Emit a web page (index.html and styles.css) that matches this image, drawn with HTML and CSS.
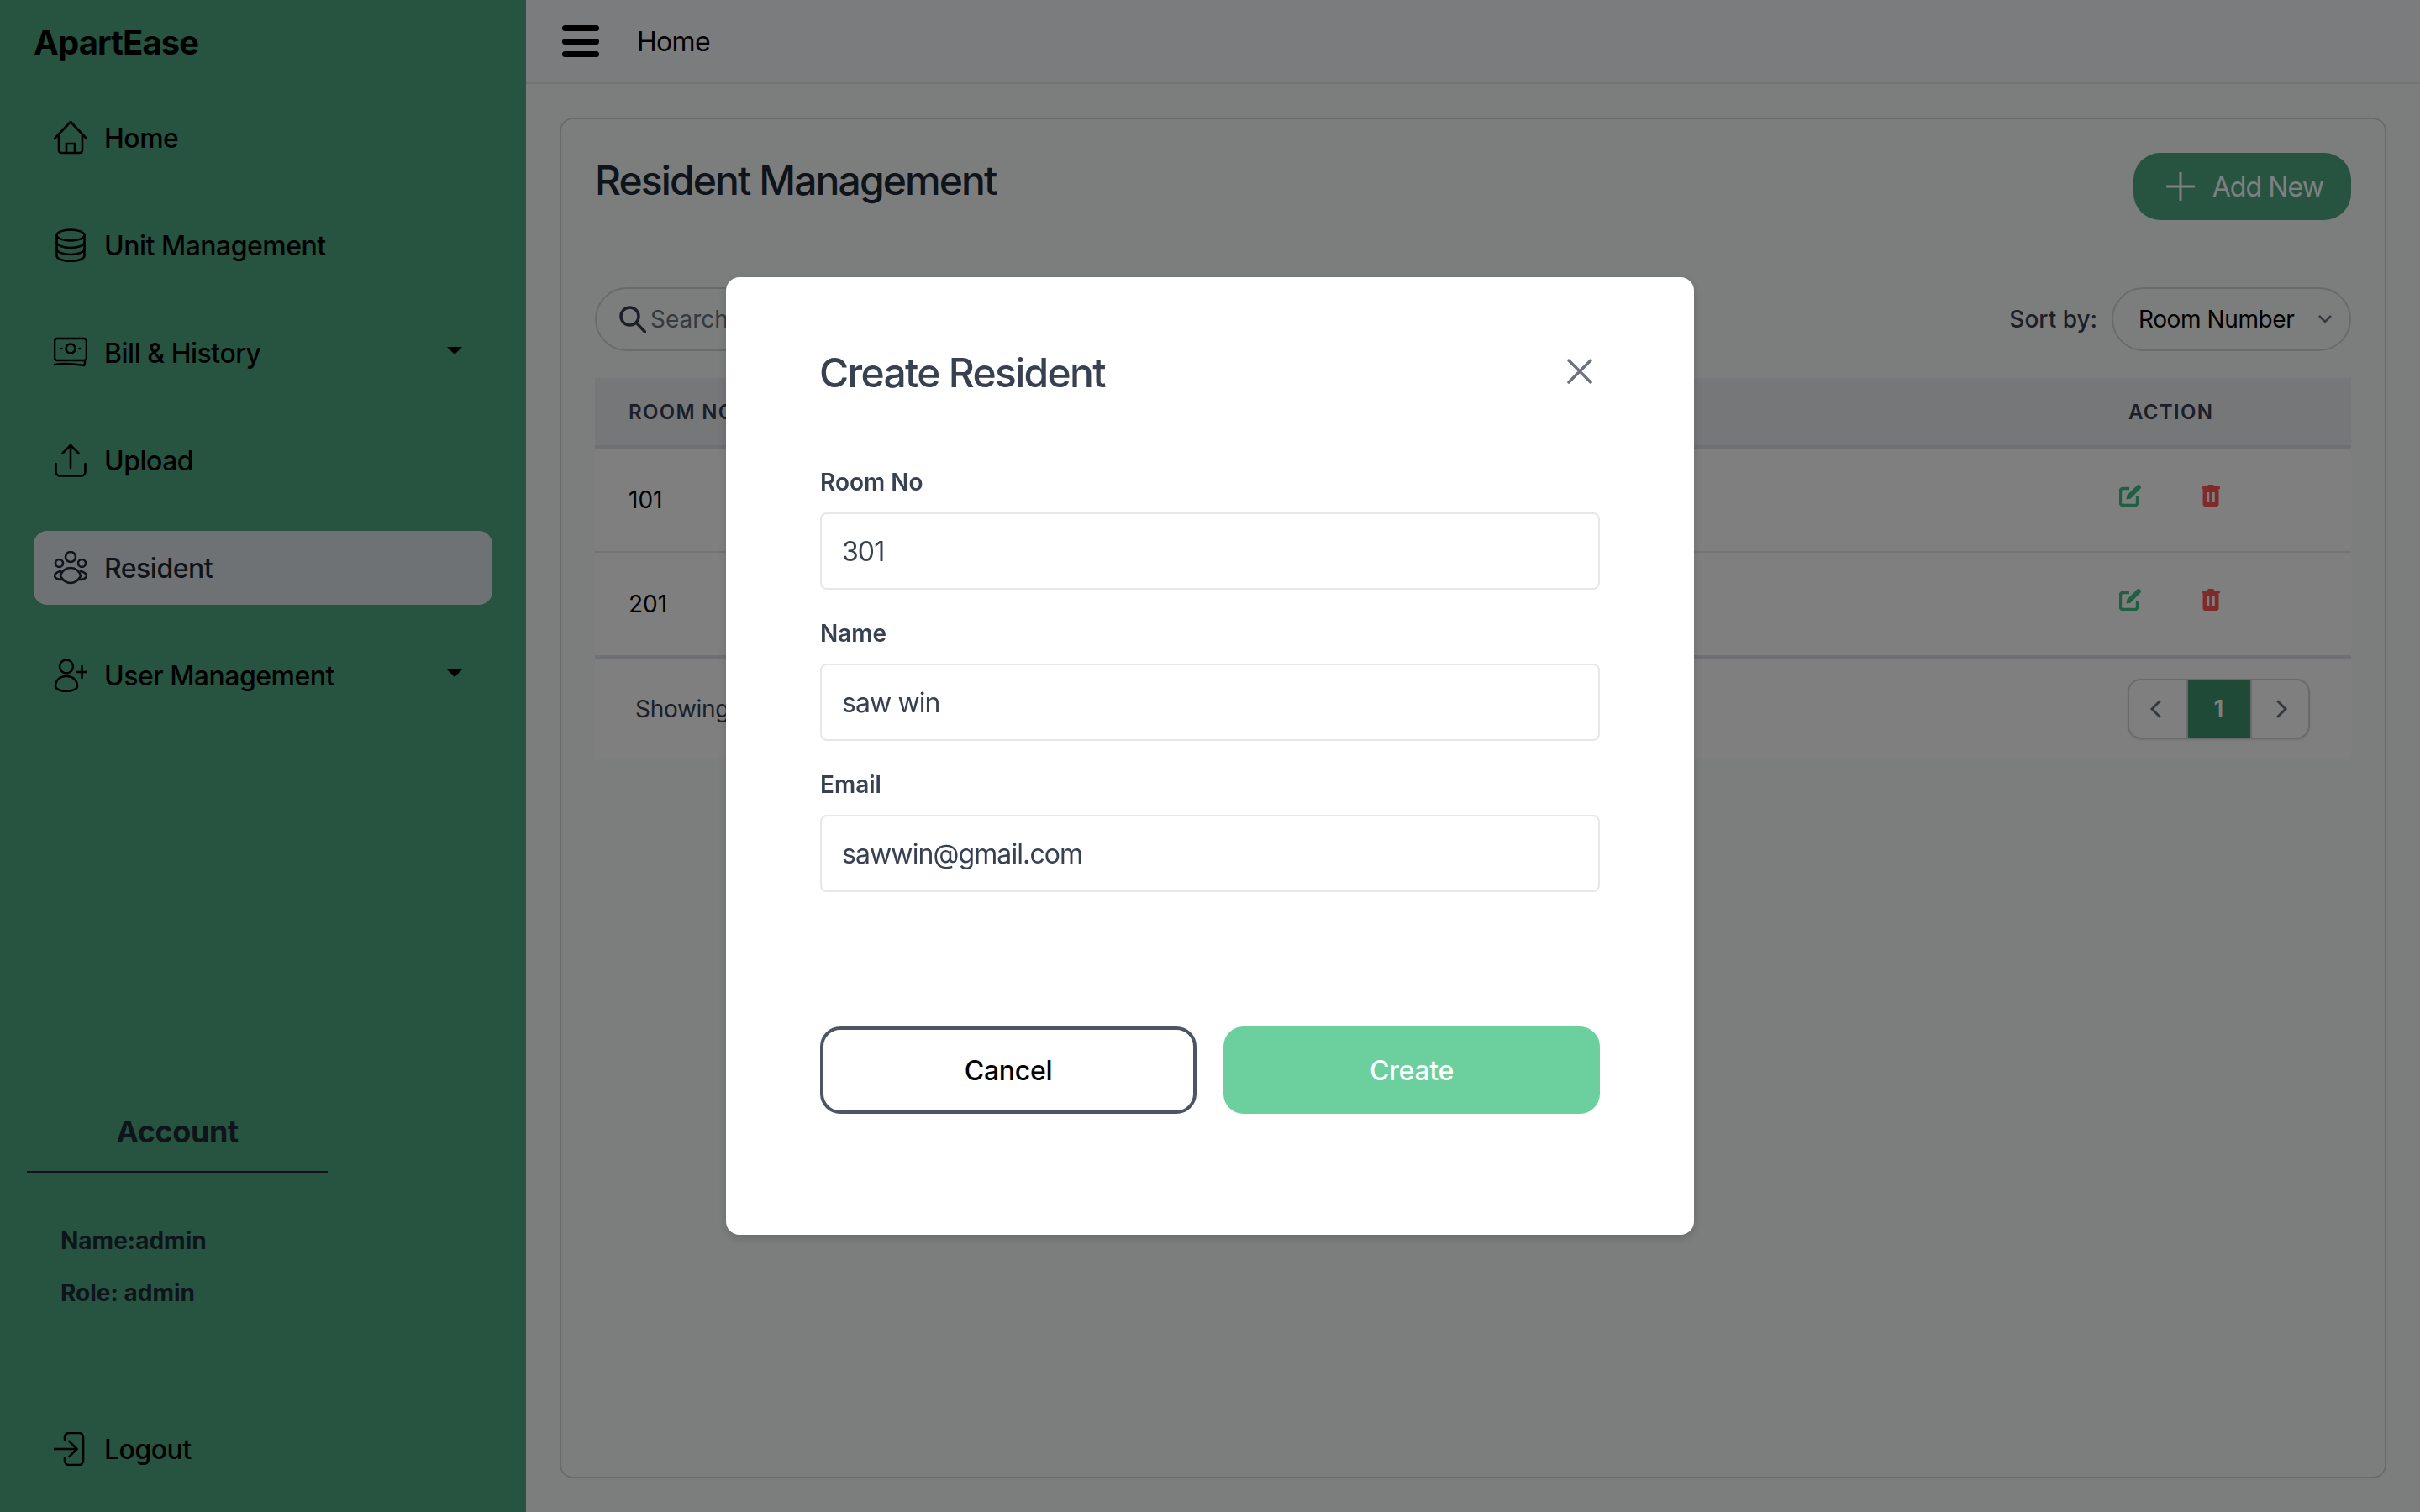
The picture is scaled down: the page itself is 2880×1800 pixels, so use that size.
FILE: index.html
```html
<!DOCTYPE html>
<html lang="en">
<head>
    <meta charset="UTF-8">
    <title>ApartEase - Resident Management</title>
    <link rel="stylesheet" href="styles.css">
</head>
<body>
    <div class="app">
        <aside class="sidebar">
            <div class="logo">ApartEase</div>
            <nav class="nav">
                <a class="nav-item">
                    <svg class="nav-icon" viewBox="0 0 40 40"><path d="M1 21 20 1l19 20"/><path d="M6 16v19a3 3 0 0 0 3 3h22a3 3 0 0 0 3-3V16"/><path d="M15 38V27h10v11"/></svg>
                    <span>Home</span>
                </a>
                <a class="nav-item">
                    <svg class="nav-icon" viewBox="0 0 40 40"><ellipse cx="20" cy="8" rx="16.500" ry="6.500"/><path d="M3.500 8v24.500C3.500 36 11 39 20 39s16.500-3 16.500-6.500V8"/><path d="M3.500 16.500C3.500 20 11 23 20 23s16.500-3 16.500-6.500"/><path d="M3.500 24.500C3.500 28 11 31 20 31s16.500-3 16.500-6.500"/></svg>
                    <span>Unit Management</span>
                </a>
                <a class="nav-item">
                    <svg class="nav-icon" viewBox="0 0 40 40"><rect x="1" y="3" width="38" height="26" rx="3"/><circle cx="20" cy="15" r="5.500"/><path d="M1 34c10-2 22-1 35 1 1-1 1-3 1-4"/><path d="M9 15h.5M30.500 15h.5"/></svg>
                    <span>Bill &amp; History</span>
                    <span class="caret"></span>
                </a>
                <a class="nav-item">
                    <svg class="nav-icon" viewBox="0 0 40 40"><path d="M20 29V2"/><path d="M10.500 11.500 20 2l9.500 9.500"/><path d="M2.500 24v9.500a5 5 0 0 0 5 5h25a5 5 0 0 0 5-5V24"/></svg>
                    <span>Upload</span>
                </a>
                <a class="nav-item active">
                    <svg class="nav-icon" viewBox="0 0 40 40"><circle cx="20" cy="7" r="6"/><circle cx="6.500" cy="14.500" r="4.500"/><circle cx="33.500" cy="14.500" r="4.500"/><path d="M8 30c1-6 6-10 12-10s11 4 12 10c-3 5-7 8-12 8s-9-3-12-8Z"/><path d="M8 24c-4 1-7 3-7 6 1 2 4 4 9 4M32 24c4 1 7 3 7 6-1 2-4 4-9 4"/></svg>
                    <span>Resident</span>
                </a>
                <a class="nav-item">
                    <svg class="nav-icon" viewBox="0 0 40 40"><circle cx="15" cy="9.500" r="8"/><path d="M2 33c0-7 5-12 13-12s13 5 13 12c0 3-6 6-13 6S2 36 2 33Z"/><path d="M33.500 9v14M28 16h11"/></svg>
                    <span>User Management</span>
                    <span class="caret"></span>
                </a>
            </nav>
            <div class="account">
                <h2 class="account-title">Account</h2>
                <p class="account-line">Name:admin</p>
                <p class="account-line">Role: admin</p>
            </div>
            <a class="nav-item logout">
                <svg class="nav-icon" viewBox="0 0 40 40"><path d="M13 9V6a5 5 0 0 1 5-5h12a5 5 0 0 1 5 5v28a5 5 0 0 1-5 5H18a5 5 0 0 1-5-5v-3"/><path d="M0 20h27"/><path d="m18.500 11 9 9-9 9"/></svg>
                <span>Logout</span>
            </a>
        </aside>

        <div class="content">
            <header class="topbar">
                <div class="burger"><span></span><span></span><span></span></div>
                <span class="crumb">Home</span>
            </header>
            <main class="main">
                <section class="card">
                    <div class="card-head">
                        <h1>Resident Management</h1>
                        <button class="add-btn">
                            <svg class="plus" viewBox="0 0 34 34"><path d="M17 1v32M1 17h32"/></svg>
                            Add New
                        </button>
                    </div>
                    <div class="toolbar">
                        <div class="search">
                            <svg class="search-icon" viewBox="0 0 32 32"><circle cx="12.500" cy="12.500" r="10.500"/><path d="m20 20 10.500 11"/></svg>
                            <span class="search-text">Search by name</span>
                        </div>
                        <div class="sort">
                            <span class="sort-label">Sort by:</span>
                            <div class="select">
                                <span>Room Number</span>
                                <svg class="select-arrow" viewBox="0 0 16 10"><path d="m1 1 7 7 7-7"/></svg>
                            </div>
                        </div>
                    </div>
                    <table class="table">
                        <thead>
                            <tr>
                                <th>ROOM NO</th>
                                <th class="col-action">ACTION</th>
                            </tr>
                        </thead>
                        <tbody>
                            <tr>
                                <td>101</td>
                                <td class="cell-action">
                                    <div class="actions">
                                        <svg class="icon-edit" viewBox="0 0 26 26"><path class="edit-box" d="M12 4.500H4a2.500 2.500 0 0 0-2.500 2.500v15A2.500 2.500 0 0 0 4 24.500h15a2.500 2.500 0 0 0 2.500-2.500v-8"/><path class="edit-pen" d="m8.500 17.500.8-5L21 1a2.500 2.500 0 0 1 4 4L13.500 16.700Z"/></svg>
                                        <svg class="icon-trash" viewBox="0 0 22 26"><path d="M8 0h6l1.500 2H21a1 1 0 0 1 1 1v2H0V3a1 1 0 0 1 1-1h5.500Z"/><path fill-rule="evenodd" d="M1.500 5h19v18a3 3 0 0 1-3 3h-13a3 3 0 0 1-3-3Zm4.800 4v12h3V9Zm6.400 0v12h3V9Z"/></svg>
                                    </div>
                                </td>
                            </tr>
                            <tr>
                                <td>201</td>
                                <td class="cell-action">
                                    <div class="actions">
                                        <svg class="icon-edit" viewBox="0 0 26 26"><path class="edit-box" d="M12 4.500H4a2.500 2.500 0 0 0-2.500 2.500v15A2.500 2.500 0 0 0 4 24.500h15a2.500 2.500 0 0 0 2.500-2.500v-8"/><path class="edit-pen" d="m8.500 17.500.8-5L21 1a2.500 2.500 0 0 1 4 4L13.500 16.700Z"/></svg>
                                        <svg class="icon-trash" viewBox="0 0 22 26"><path d="M8 0h6l1.500 2H21a1 1 0 0 1 1 1v2H0V3a1 1 0 0 1 1-1h5.500Z"/><path fill-rule="evenodd" d="M1.500 5h19v18a3 3 0 0 1-3 3h-13a3 3 0 0 1-3-3Zm4.800 4v12h3V9Zm6.400 0v12h3V9Z"/></svg>
                                    </div>
                                </td>
                            </tr>
                        </tbody>
                    </table>
                    <div class="table-foot">
                        <span class="showing">Showing 1 to 2 of 2</span>
                        <div class="pager">
                            <span class="page-btn"><svg class="page-arrow" viewBox="0 0 14 22"><path d="M12 2 3 11l9 9"/></svg></span>
                            <span class="page-btn current">1</span>
                            <span class="page-btn"><svg class="page-arrow" viewBox="0 0 14 22"><path d="m2 2 9 9-9 9"/></svg></span>
                        </div>
                    </div>
                </section>
            </main>
        </div>
    </div>

    <!-- modal -->
    <div class="overlay">
        <form class="modal">
            <div class="modal-head">
                <h2>Create Resident</h2>
                <svg class="close" viewBox="0 0 30 30"><path d="m2 2 26 26M28 2 2 28"/></svg>
            </div>
            <label class="field-label" for="room">Room No</label>
            <input class="field" id="room" type="text" value="301">
            <label class="field-label" for="name">Name</label>
            <input class="field" id="name" type="text" value="saw win">
            <label class="field-label" for="email">Email</label>
            <input class="field" id="email" type="text" value="sawwin@gmail.com">
            <div class="modal-actions">
                <button type="button" class="btn-cancel">Cancel</button>
                <button type="button" class="btn-create">Create</button>
            </div>
        </form>
    </div>
</body>
</html>
```

FILE: styles.css
```css
* {
    box-sizing: border-box;
}

html, body {
    margin: 0;
    height: 100%;
}

body {
    font-family: Inter, "Noto Sans", sans-serif;
    color: #000;
    background-color: #f9fcfb;
    overflow: hidden;
}

h1, h2, p {
    margin: 0;
}

.app {
    display: flex;
    height: 100vh;
}

/* sidebar */
.sidebar {
    display: flex;
    flex-direction: column;
    width: 626px;
    flex-shrink: 0;
    padding: 0 40px 31px;
    background-color: #4ea882;
}

.logo {
    height: 100px;
    line-height: 102px;
    font-size: 40px;
    font-weight: 700;
    letter-spacing: -0.9px;
}

.nav {
    display: flex;
    flex-direction: column;
    gap: 40px;
    margin-top: 20px;
}

.nav-item {
    display: flex;
    align-items: center;
    height: 88px;
    padding: 0 24px;
    border-radius: 16px;
    font-size: 32px;
    font-weight: 500;
    letter-spacing: -0.5px;
}

.nav-item.active {
    background-color: #dee5eb;
    color: #1f2937;
}

.nav-icon {
    width: 40px;
    height: 40px;
    margin-right: 20px;
    flex-shrink: 0;
    fill: none;
    stroke: currentColor;
    stroke-width: 2.600;
    stroke-linecap: round;
    stroke-linejoin: round;
}

.caret {
    width: 0;
    height: 0;
    margin-left: auto;
    margin-right: 12px;
    margin-bottom: 5px;
    border-left: 9px solid transparent;
    border-right: 9px solid transparent;
    border-top: 9px solid #000;
}

.account {
    margin-top: auto;
    width: 358px;
    margin-left: -8px;
    color: #1f2937;
}

.account-title {
    height: 74px;
    margin-bottom: 50px;
    border-bottom: 2px solid #1f2937;
    text-align: center;
    font-size: 36px;
    font-weight: 700;
    line-height: 50px;
    letter-spacing: -0.4px;
}

.account-line {
    padding-left: 40px;
    font-size: 28px;
    font-weight: 700;
    line-height: 62px;
}

.logout {
    margin-top: 111px;
}

/* main area */
.content {
    display: flex;
    flex-direction: column;
    flex: 1;
    min-width: 0;
}

.topbar {
    display: flex;
    align-items: center;
    height: 100px;
    padding: 0 43px;
    background-color: #f6f8fd;
    border-bottom: 2px solid #e5e7eb;
}

.burger {
    display: flex;
    flex-direction: column;
    justify-content: space-between;
    width: 44px;
    height: 38px;
    margin-right: 45px;
}

.burger span {
    height: 7px;
    border-radius: 4px;
    background-color: #000;
}

.crumb {
    font-size: 32px;
    letter-spacing: -0.7px;
}

.main {
    flex: 1;
    display: flex;
    padding: 40px;
    min-height: 0;
}

.card {
    flex: 1;
    padding: 40px;
    border: 2px solid #d1d5db;
    border-radius: 16px;
}

.card-head {
    display: flex;
    justify-content: space-between;
    align-items: flex-start;
}

.card-head h1 {
    font-size: 48px;
    font-weight: 500;
    line-height: 66px;
    letter-spacing: -1.900px;
    color: #1f2937;
}

.add-btn {
    display: flex;
    align-items: center;
    gap: 21px;
    height: 80px;
    padding: 0 33px 0 39px;
    border: none;
    border-radius: 32px;
    background-color: #4ea882;
    color: #fff;
    font-family: inherit;
    font-size: 32px;
    font-weight: 400;
    letter-spacing: -0.9px;
}

.plus {
    width: 34px;
    height: 34px;
    fill: none;
    stroke: #fff;
    stroke-width: 3;
    stroke-linecap: round;
}

.toolbar {
    display: flex;
    justify-content: space-between;
    margin-top: 80px;
    margin-bottom: 32px;
}

.search {
    display: flex;
    align-items: center;
    width: 500px;
    height: 76px;
    padding-left: 27px;
    border: 2px solid #d1d5db;
    border-radius: 38px;
}

.search-icon {
    width: 32px;
    height: 32px;
    margin-right: 5px;
    fill: none;
    stroke: #374151;
    stroke-width: 3.500;
    stroke-linecap: round;
}

.search-text {
    font-size: 28px;
    color: #6b7280;
}

.sort {
    display: flex;
    align-items: center;
    gap: 17px;
}

.sort-label {
    font-size: 28px;
    font-weight: 500;
    color: #374151;
}

.select {
    display: flex;
    align-items: center;
    width: 285px;
    height: 76px;
    padding-left: 30px;
    border: 2px solid #d1d5db;
    border-radius: 38px;
    font-size: 28px;
    letter-spacing: -0.4px;
}

.select-arrow {
    width: 16px;
    height: 10px;
    margin-left: 29px;
    fill: none;
    stroke: #6b7280;
    stroke-width: 2.500;
}

.table {
    width: 100%;
    border-collapse: separate;
    border-spacing: 0;
    background-color: #fff;
}

.table th {
    height: 84px;
    padding: 0 40px;
    text-align: left;
    font-size: 24px;
    font-weight: 600;
    letter-spacing: 1.300px;
    color: #374151;
    background-color: #edeff2;
    border-bottom: 4px solid #dde0e6;
}

.table .col-action {
    width: 305px;
}

.table td {
    height: 124px;
    padding: 0 40px;
    font-size: 28px;
    border-bottom: 2px solid #e5e7eb;
}

.table tr:last-child td {
    height: 126px;
    border-bottom: 4px solid #dde0e6;
}

.table .cell-action {
    padding-left: 29px;
}

.actions {
    display: flex;
    align-items: center;
    gap: 72px;
    margin-bottom: 10px;
}

.icon-edit {
    width: 26px;
    height: 26px;
}

.edit-box {
    fill: none;
    stroke: #3fbf86;
    stroke-width: 3.400;
}

.edit-pen {
    fill: #3fbf86;
}

.icon-trash {
    width: 22px;
    height: 26px;
    fill: #ff5656;
}

.table-foot {
    display: flex;
    justify-content: space-between;
    align-items: center;
    height: 120px;
    padding: 0 49px 0 48px;
    background-color: #fff;
}

.showing {
    font-size: 28px;
    letter-spacing: -0.3px;
    color: #374151;
}

.pager {
    display: flex;
    width: 217px;
    height: 72px;
    border: 2px solid #d1d5db;
    border-radius: 16px;
    box-shadow: 0 1px 3px rgba(0, 0, 0, 0.1);
    overflow: hidden;
}

.page-btn {
    display: flex;
    flex: 1;
    align-items: center;
    justify-content: center;
    color: #fff;
    font-size: 28px;
    font-weight: 600;
}

.page-btn:first-child {
    padding-right: 6px;
}

.page-btn:last-child {
    padding-left: 6px;
}

.page-btn.current {
    flex: none;
    width: 78px;
    border-left: 2px solid #d1d5db;
    border-right: 2px solid #d1d5db;
    background-clip: padding-box;
    background-color: #409470;
}

.page-arrow {
    width: 14px;
    height: 22px;
    fill: none;
    stroke: #6b7280;
    stroke-width: 3;
    stroke-linecap: round;
}

/* modal */
.overlay {
    position: fixed;
    inset: 0;
    display: flex;
    align-items: center;
    justify-content: center;
    background-color: rgba(0, 0, 0, 0.5);
}

.modal {
    display: flex;
    flex-direction: column;
    width: 1152px;
    height: 1140px;
    padding: 0 112px;
    border-radius: 16px;
    background-color: #fff;
    box-shadow: 0 4px 12px rgba(0, 0, 0, 0.15);
}

.modal-head {
    display: flex;
    justify-content: space-between;
    align-items: center;
    height: 66px;
    margin-top: 80px;
    margin-bottom: 81px;
}

.modal-head h2 {
    font-size: 48px;
    font-weight: 500;
    letter-spacing: -1.700px;
    margin-left: -1px;
    color: #374151;
}

.close {
    width: 30px;
    height: 30px;
    margin-right: 9px;
    margin-bottom: 2px;
    fill: none;
    stroke: #6b7280;
    stroke-width: 3.500;
    stroke-linecap: round;
}

.field-label {
    margin-bottom: 19px;
    font-size: 28px;
    font-weight: 600;
    line-height: 34px;
    color: #374151;
}

.field {
    flex-shrink: 0;
    width: 100%;
    height: 92px;
    margin-bottom: 35px;
    padding: 0 24px;
    border: 2px solid #e5e7eb;
    border-radius: 8px;
    font-family: inherit;
    font-size: 32px;
    letter-spacing: -0.9px;
    color: #374151;
    outline: none;
}

.modal-actions {
    display: grid;
    grid-template-columns: 1fr 1fr;
    gap: 32px;
    margin-top: 125px;
}

.modal-actions button {
    height: 104px;
    padding: 0;
    border-radius: 24px;
    font-family: inherit;
    font-size: 32px;
    font-weight: 500;
    letter-spacing: -0.3px;
}

.btn-cancel {
    border: 4px solid #4b5563;
    background-color: #fff;
    color: #000;
}

.btn-create {
    border: none;
    background-color: #6bcf9e;
    color: #fff;
}
```
